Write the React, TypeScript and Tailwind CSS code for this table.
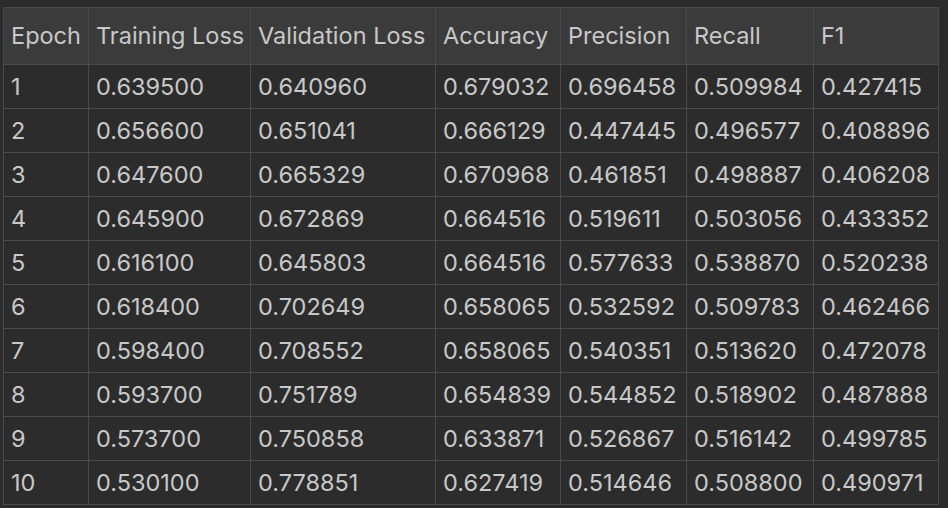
const headers = ['Epoch', 'Training Loss', 'Validation Loss', 'Accuracy', 'Precision', 'Recall', 'F1'];
const widths = ['w-[85px]', 'w-[162px]', 'w-[185px]', 'w-[125px]', 'w-[126px]', 'w-[127px]', 'w-[125px]'];

const rows = [
  [1, '0.639500', '0.640960', '0.679032', '0.696458', '0.509984', '0.427415'],
  [2, '0.656600', '0.651041', '0.666129', '0.447445', '0.496577', '0.408896'],
  [3, '0.647600', '0.665329', '0.670968', '0.461851', '0.498887', '0.406208'],
  [4, '0.645900', '0.672869', '0.664516', '0.519611', '0.503056', '0.433352'],
  [5, '0.616100', '0.645803', '0.664516', '0.577633', '0.538870', '0.520238'],
  [6, '0.618400', '0.702649', '0.658065', '0.532592', '0.509783', '0.462466'],
  [7, '0.598400', '0.708552', '0.658065', '0.540351', '0.513620', '0.472078'],
  [8, '0.593700', '0.751789', '0.654839', '0.544852', '0.518902', '0.487888'],
  [9, '0.573700', '0.750858', '0.633871', '0.526867', '0.516142', '0.499785'],
  [10, '0.530100', '0.778851', '0.627419', '0.514646', '0.508800', '0.490971'],
];

function App() {
  return (
    <div className="w-[948px] h-[508px] bg-[#2c2c2c] pt-[7px] pl-[3px] overflow-hidden font-['Inter',sans-serif] text-[#c8c8c8]">
      <table className="border-collapse table-fixed border border-[#4a4a4a] text-[23.5px]">
        <thead>
          <tr className="h-[57px] bg-[#3b3b3b]">
            {headers.map((h, i) => (
              <th key={h} className={`${widths[i]} border border-[#4a4a4a] pl-[7px] pr-1 text-left font-normal whitespace-nowrap`}>
                {h}
              </th>
            ))}
          </tr>
        </thead>
        <tbody>
          {rows.map(row => (
            <tr key={row[0]} className="h-[44px]">
              {row.map((cell, i) => (
                <td key={i} className="border border-[#4a4a4a] pl-[7px] pr-1 whitespace-nowrap">
                  {cell}
                </td>
              ))}
            </tr>
          ))}
        </tbody>
      </table>
    </div>
  );
}

export default App;
